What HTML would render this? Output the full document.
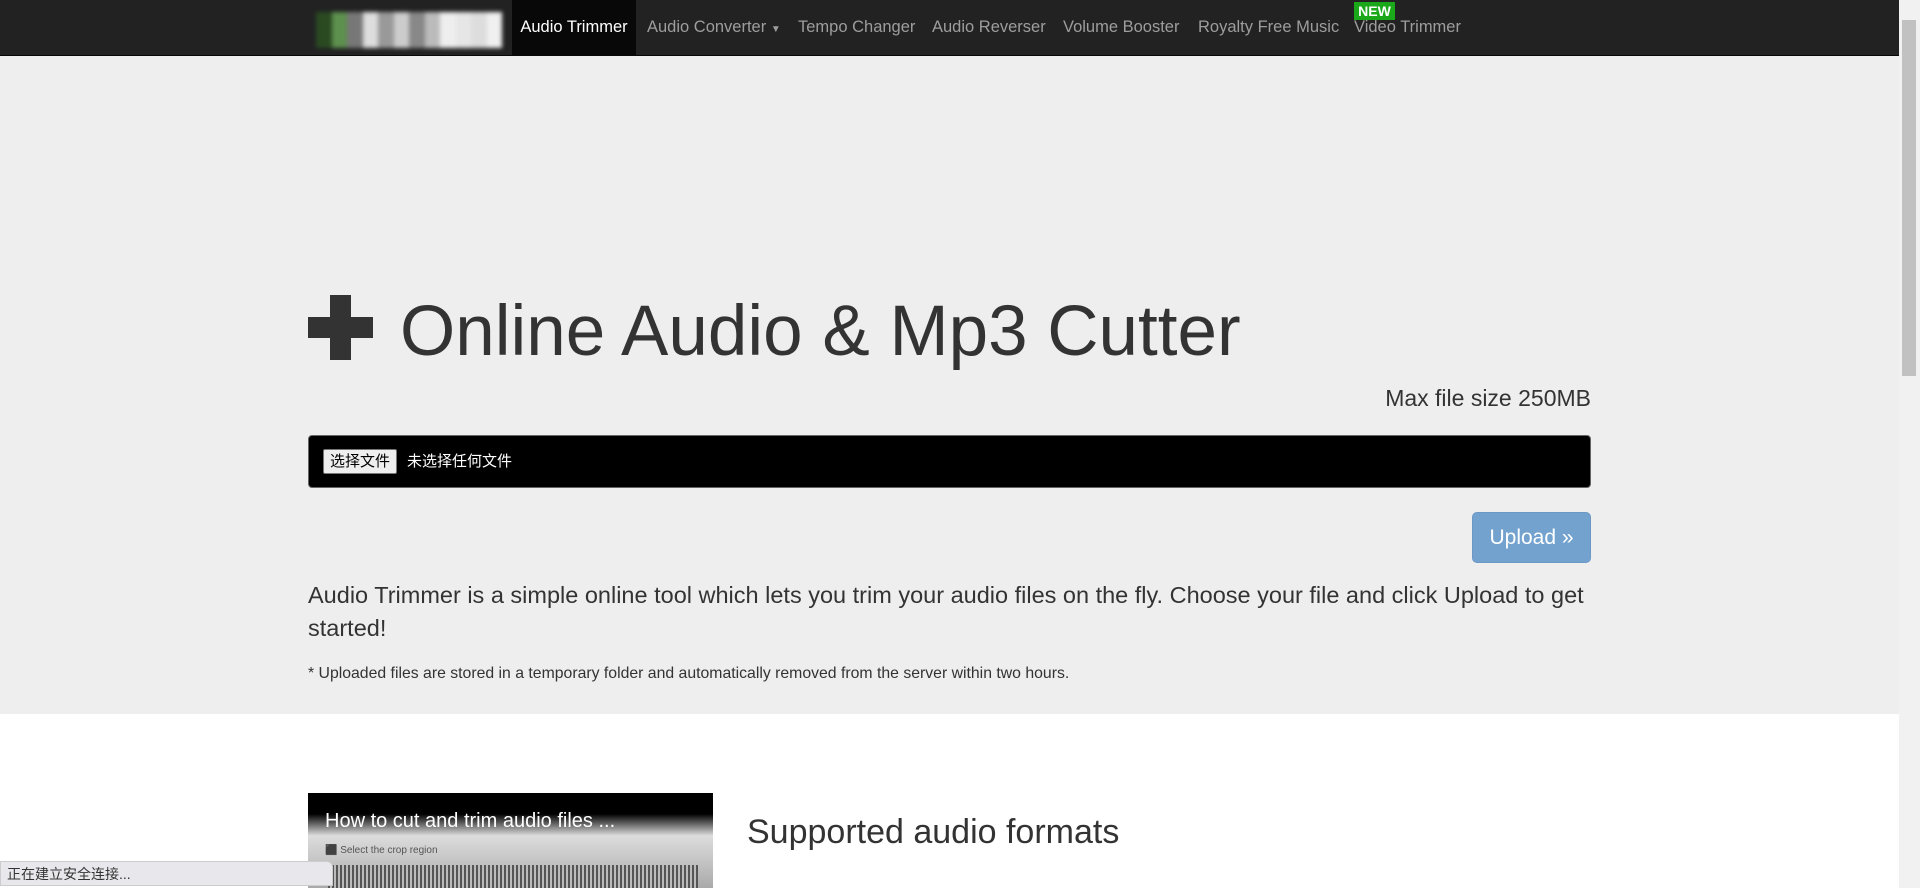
<!DOCTYPE html>
<html><head><meta charset="utf-8"><style>
*{box-sizing:border-box;margin:0;padding:0}
body{width:1920px;height:888px;overflow:hidden;font-family:"Liberation Sans","Noto Sans CJK SC",sans-serif;background:#fff;color:#333;position:relative}
.nav{position:absolute;left:0;top:0;width:1899px;height:56px;background:#222;border-bottom:1px solid #080808}
.nav a{position:absolute;top:0;height:56px;line-height:55px;font-size:16.5px;color:#9d9d9d;white-space:nowrap}
.logo{position:absolute;left:316px;top:12px;height:36px;width:186px;display:flex;filter:blur(2px)}
.logo span{flex:1;height:100%}
.jumbo{position:absolute;left:0;top:56px;width:1899px;height:658px;background:#eee}
.sb{position:absolute;right:0;top:0;width:21px;height:888px;background:#f1f1f1}
.sb div{position:absolute;left:3px;top:20px;width:14px;height:356px;background:#c1c1c1}
</style></head><body>
<div class="nav">
<div class="logo"><span style="background:#2a4a22"></span><span style="background:#5d8f4e"></span><span style="background:#777"></span><span style="background:#ddd"></span><span style="background:#999"></span><span style="background:#ccc"></span><span style="background:#888"></span><span style="background:#bbb"></span><span style="background:#eee"></span><span style="background:#e6e6e6"></span><span style="background:#ddd"></span><span style="background:#f0f0f0"></span></div>
<a style="left:512px;width:124px;background:#080808;color:#fff;text-align:center">Audio Trimmer</a>
<a style="left:647px">Audio Converter <span style="font-size:10px">▼</span></a>
<a style="left:798px">Tempo Changer</a>
<a style="left:932px">Audio Reverser</a>
<a style="left:1063px">Volume Booster</a>
<a style="left:1198px">Royalty Free Music</a>
<a style="left:1354px">Video Trimmer</a>
<div style="position:absolute;left:1354px;top:2px;width:41px;height:18px;background:#1aa81a;color:#fff;font-weight:bold;font-size:14px;line-height:18px;text-align:center">NEW</div>
</div>
<div class="jumbo">
<div style="position:absolute;left:308px;top:239px;width:65px;height:65px">
<div style="position:absolute;left:22px;top:0;width:21px;height:65px;background:#333"></div>
<div style="position:absolute;left:0;top:22px;width:65px;height:21px;background:#333"></div></div>
<div style="position:absolute;left:400px;top:224px;font-size:71px;line-height:104px;color:#333;white-space:nowrap">Online Audio &amp; Mp3 Cutter</div>
<div style="position:absolute;right:308px;top:329px;font-size:23px;color:#333">Max file size 250MB</div>
<div style="position:absolute;left:308px;top:379px;width:1283px;height:53px;background:#000;border-radius:4px;border:1px solid #666">
<div style="position:absolute;left:14px;top:13px;height:25px;padding:0 6px;background:#efefef;border:1px solid #767676;border-radius:2px;font-size:15px;line-height:23px;color:#000">选择文件</div>
<div style="position:absolute;left:98px;top:13px;font-size:15px;line-height:25px;color:#fff">未选择任何文件</div></div>
<div style="position:absolute;left:1472px;top:456px;width:119px;height:51px;background:#73a2cf;border:1px solid #6b98c4;border-radius:5px;color:#fff;font-size:21px;line-height:49px;text-align:center">Upload »</div>
<div style="position:absolute;left:308px;top:523px;width:1290px;font-size:23.5px;line-height:33px;color:#333">Audio Trimmer is a simple online tool which lets you trim your audio files on the fly. Choose your file and click Upload to get started!</div>
<div style="position:absolute;left:308px;top:609px;font-size:15.8px;color:#333">* Uploaded files are stored in a temporary folder and automatically removed from the server within two hours.</div>
</div>
<div style="position:absolute;left:308px;top:793px;width:405px;height:95px;background:linear-gradient(#000 0,#000 22%,#ddd 45%,#aaa 100%)">
<div style="position:absolute;left:17px;top:17px;color:#fff;font-size:20px">How to cut and trim audio files ...</div>
<div style="position:absolute;left:17px;top:52px;color:#555;font-size:10px">⬛ Select the crop region</div>
<div style="position:absolute;left:20px;top:72px;width:370px;height:23px;background:repeating-linear-gradient(90deg,#555 0 2px,#bbb 2px 4px)"></div></div>
<div style="position:absolute;left:747px;top:813px;font-size:34px;color:#333">Supported audio formats</div>
<div style="position:absolute;left:0;top:861px;width:333px;height:25px;background:#e8e8ec;border:1px solid #ccc;border-radius:0 6px 0 0;font-size:14px;line-height:24px;padding-left:6px;color:#333">正在建立安全连接...</div>
<div class="sb"><div></div></div>
</body></html>
